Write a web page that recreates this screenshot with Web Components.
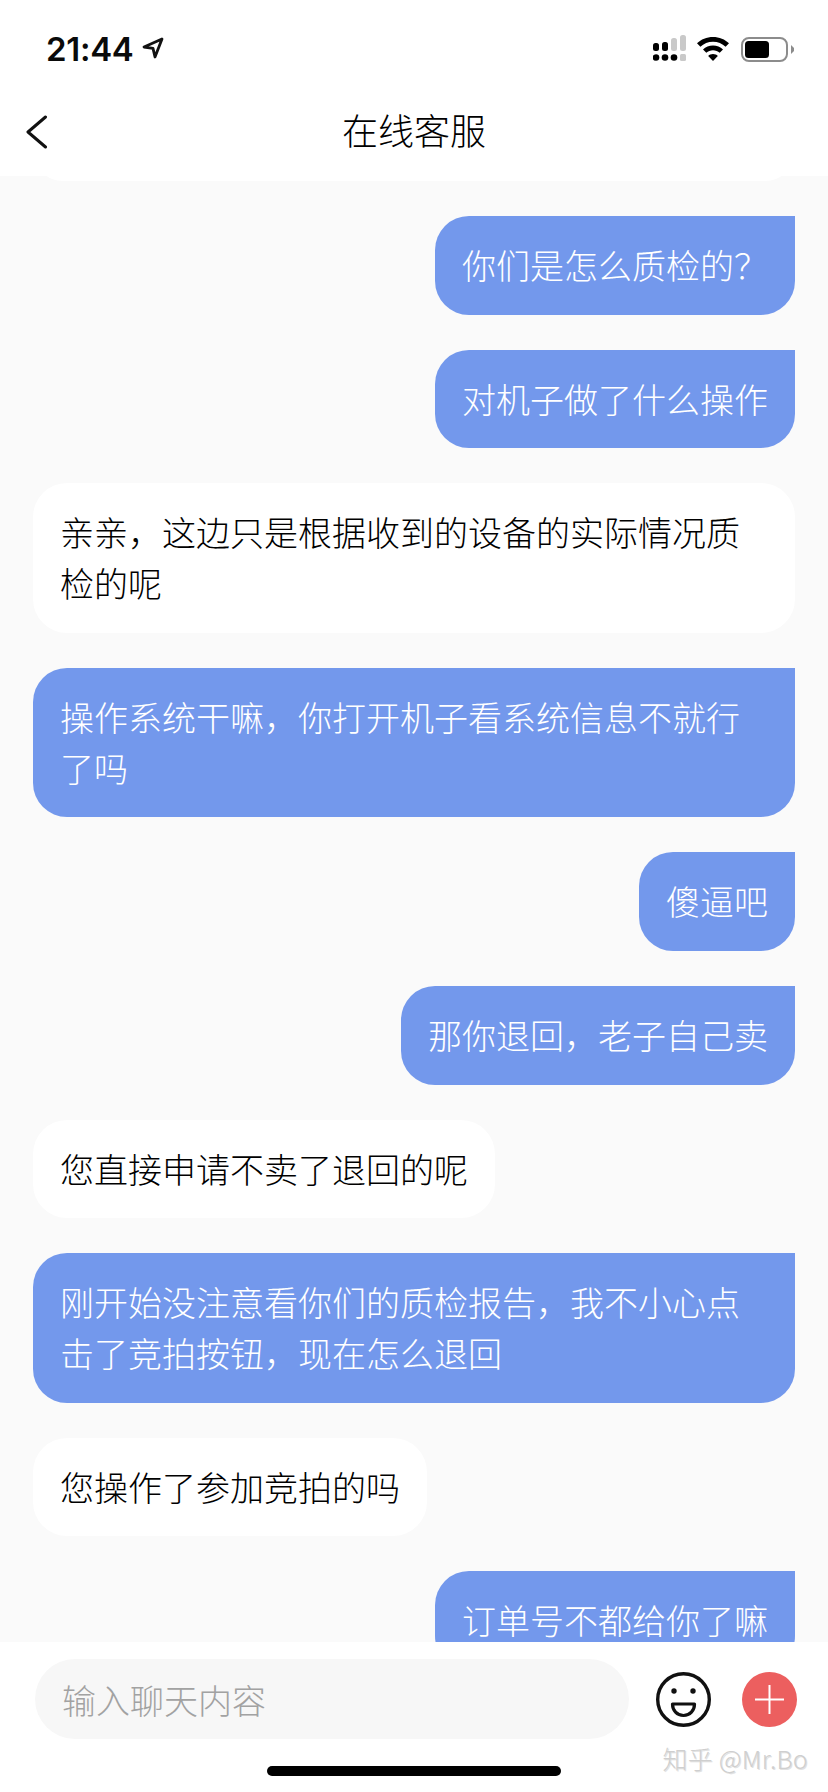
<!DOCTYPE html>
<html lang="zh-CN">
<head>
<meta charset="utf-8">
<title>在线客服</title>
<style>
html,body{margin:0;padding:0;height:100%;background:#fff;}
body{font-family:"Noto Sans CJK SC","Noto Sans",sans-serif;}
</style>
</head>
<body>
<chat-page>
  <status-bar slot="status" time="21:44"></status-bar>
  <nav-bar slot="nav">在线客服</nav-bar>
  <chat-bubble slot="msgs" from="them" stub></chat-bubble>
  <chat-bubble slot="msgs" from="me">你们是怎么质检的？</chat-bubble>
  <chat-bubble slot="msgs" from="me">对机子做了什么操作</chat-bubble>
  <chat-bubble slot="msgs" from="them">亲亲，这边只是根据收到的设备的实际情况质检的呢</chat-bubble>
  <chat-bubble slot="msgs" from="me">操作系统干嘛，你打开机子看系统信息不就行了吗</chat-bubble>
  <chat-bubble slot="msgs" from="me">傻逼吧</chat-bubble>
  <chat-bubble slot="msgs" from="me">那你退回，老子自己卖</chat-bubble>
  <chat-bubble slot="msgs" from="them">您直接申请不卖了退回的呢</chat-bubble>
  <chat-bubble slot="msgs" from="me">刚开始没注意看你们的质检报告，我不小心点击了竞拍按钮，现在怎么退回</chat-bubble>
  <chat-bubble slot="msgs" from="them">您操作了参加竞拍的吗</chat-bubble>
  <chat-bubble slot="msgs" from="me">订单号不都给你了嘛</chat-bubble>
  <chat-input slot="footer" placeholder="输入聊天内容"></chat-input>
</chat-page>
<script>
class ChatPage extends HTMLElement {
    constructor() {
        super();
        this.attachShadow({ mode: 'open' });
        this.shadowRoot.innerHTML = `
        <style>
        :host{display:flex;flex-direction:column;width:828px;height:1792px;overflow:hidden;background:#fff;}
        #msgs{
            flex:1;
            min-height:0;
            overflow:hidden;
            background:#fafafa;
            display:flex;
            flex-direction:column;
            gap:35px;
            padding:0 33px;
        }
        </style>
        <slot name="status"></slot>
        <slot name="nav"></slot>
        <section id="msgs"><slot name="msgs"></slot></section>
        <slot name="footer"></slot>
        `
    }
}

class StatusBar extends HTMLElement {
    constructor() {
        super();
        this.attachShadow({ mode: 'open' });
        this.shadowRoot.innerHTML = `
        <style>
        :host{display:flex;align-items:center;height:88px;padding:10px 34px 0 46px;box-sizing:border-box;}
        #time{font:600 33px/1 Inter,"Liberation Sans",sans-serif;color:#0a0a0a;letter-spacing:-.3px;}
        #arrow{margin-left:8px;margin-top:-2px;}
        #icons{margin-left:auto;}
        svg{display:block;}
        </style>
        <span id="time"></span>
        <svg id="arrow" width="22" height="22" viewBox="0 0 22 22"><path d="M20 2 2 10l9 1.400L13 20z" fill="none" stroke="#111" stroke-width="2.800" stroke-linejoin="round"/></svg>
        <svg id="icons" width="141" height="28" viewBox="653 35 141 28">
          <g fill="#000">
            <rect x="653" y="43" width="6" height="8" rx="2.5"/><rect x="662" y="42" width="6" height="9" rx="2.5"/>
            <circle cx="656" cy="57.5" r="3.3"/><circle cx="665" cy="57.5" r="3.3"/><circle cx="674" cy="57.5" r="3.3"/>
          </g>
          <g fill="#c9c9c9">
            <rect x="671" y="38" width="6" height="13" rx="2.5"/><rect x="680" y="35" width="6" height="16" rx="2.5"/>
            <rect x="680" y="54" width="6" height="7" rx="1.5"/>
          </g>
          <path d="M713 37c-6.300 0-12 2.400-16 6.300l3.400 3.500c3.300-3.100 7.800-5 12.600-5s9.300 1.900 12.600 5l3.400-3.500C725 39.400 719.300 37 713 37z" fill="#000"/>
          <path d="M713 45.500c-3.900 0-7.400 1.500-10 3.900l3.300 3.400c1.800-1.600 4.200-2.600 6.700-2.600s4.900 1 6.700 2.600l3.300-3.400c-2.600-2.400-6.100-3.900-10-3.900z" fill="#000"/>
          <path d="M713 54c-1.900 0-3.600.7-4.800 1.900L713 61l4.800-5.100C716.600 54.700 714.900 54 713 54z" fill="#000"/>
          <rect x="742" y="38" width="45" height="23" rx="7" fill="none" stroke="#8c8c8c" stroke-width="2"/>
          <rect x="745" y="41" width="24" height="17" rx="3.500" fill="#000"/>
          <path d="M791 45l3 3v3l-3 3z" fill="#8c8c8c"/>
        </svg>
        `
        this.shadowRoot.querySelector('#time').textContent = this.getAttribute('time');
    }
}

class NavBar extends HTMLElement {
    constructor() {
        super();
        this.attachShadow({ mode: 'open' });
        this.shadowRoot.innerHTML = `
        <style>
        :host{display:flex;align-items:center;justify-content:center;height:88px;position:relative;background:#fff;}
        #back{position:absolute;left:26px;top:27px;display:block;}
        #title{font-size:36px;font-weight:300;line-height:1;color:#000;margin-top:-7px;}
        </style>
        <svg id="back" width="22" height="34" viewBox="0 0 22 34"><path d="M19.500 2 2 17l17.500 15" fill="none" stroke="#111" stroke-width="3" stroke-linecap="round" stroke-linejoin="round"/></svg>
        <span id="title"><slot></slot></span>
        `
    }
}

class ChatBubble extends HTMLElement {
    constructor() {
        super();
        this.attachShadow({ mode: 'open' });
        this.shadowRoot.innerHTML = `
        <style>
        :host{display:block;align-self:flex-start;flex:none;box-sizing:border-box;max-width:762px;padding:24px 27px;border-radius:34px;font-size:34px;font-weight:300;line-height:50.7px;background:#fff;color:#000;}
        :host([from="me"]){align-self:flex-end;background:#7398ec;color:#fff;border-top-right-radius:0;}
        /* tail of the message that scrolled under the header */
        :host([stub]){align-self:stretch;height:60px;padding:0;margin-top:-55px;}
        </style>
        <slot></slot>
        `
    }
}

class ChatInput extends HTMLElement {
    constructor() {
        super();
        this.attachShadow({ mode: 'open' });
        this.shadowRoot.innerHTML = `
        <style>
        :host{display:flex;align-items:center;flex:none;position:relative;height:150px;box-sizing:border-box;padding:17px 31px 53px 35px;background:#fff;}
        #field{width:594px;height:80px;box-sizing:border-box;padding-left:27px;border-radius:40px;background:#f7f7f7;display:flex;align-items:center;color:#a2a2a2;font-size:34px;font-weight:300;}
        svg{display:block;flex:none;}
        #smile{margin-left:27px;}
        #plus{margin-left:31px;}
        #mark{position:absolute;right:20px;bottom:19px;font-size:25px;font-weight:300;letter-spacing:.3px;line-height:30px;color:#cfcfcf;text-shadow:1px 1px 0 #e2e2e2;}
        #home{position:absolute;left:267px;bottom:16px;width:294px;height:10px;border-radius:5px;background:#000;}
        </style>
        <div id="field"></div>
        <svg id="smile" width="55" height="55" viewBox="0 0 55 55">
          <circle cx="27.500" cy="27.500" r="25.800" fill="#fff" stroke="#111" stroke-width="3.400"/>
          <circle cx="18" cy="19" r="2.700" fill="#111"/><circle cx="37" cy="19" r="2.700" fill="#111"/>
          <path d="M16.500 32h22c0 6.500-4.500 11.500-11 11.500s-11-5-11-11.500z" fill="#fff" stroke="#111" stroke-width="3.200" stroke-linejoin="round"/>
        </svg>
        <svg id="plus" width="55" height="55" viewBox="0 0 55 55">
          <circle cx="27.500" cy="27.500" r="27.500" fill="#ec5f5f"/>
          <path d="M27.500 13v29M13 27.500h29" stroke="#fff" stroke-width="2" fill="none"/>
        </svg>
        <span id="mark">知乎 @Mr.Bo</span>
        <div id="home"></div>
        `
        this.shadowRoot.querySelector('#field').textContent = this.getAttribute('placeholder');
    }
}

customElements.define('chat-page', ChatPage)
customElements.define('status-bar', StatusBar)
customElements.define('nav-bar', NavBar)
customElements.define('chat-bubble', ChatBubble)
customElements.define('chat-input', ChatInput)
</script>
</body>
</html>
